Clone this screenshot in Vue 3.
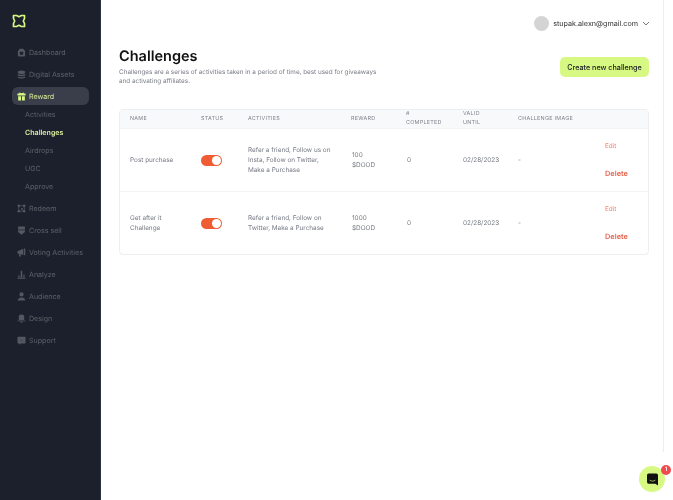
<template>
  <div class="page">
    <aside class="sidebar">
      <svg class="logo" viewBox="0 0 14 14" fill="none" stroke="#d7f984" stroke-width="1.7" stroke-linejoin="round">
        <path d="M1.5 1.5h3l2.5 1.2 2.5-1.2h3v3L11.3 7l1.2 2.5v3h-3L7 11.3l-2.5 1.2h-3v-3L2.7 7 1.5 4.5z" />
      </svg>
      <nav class="nav">
        <template v-for="item in navItems" :key="item.label">
          <a class="nav-item" :class="{ active: item.active }">
            <svg class="nav-icon" viewBox="0 0 10 10" :fill="item.active ? '#d7f984' : '#54575f'" v-html="item.icon"></svg>
            <span>{{ item.label }}</span>
          </a>
          <div v-if="item.children" class="sub-list">
            <a v-for="child in item.children" :key="child" class="sub-item" :class="{ current: child === 'Challenges' }">{{ child }}</a>
          </div>
        </template>
      </nav>
    </aside>

    <main class="main">
      <header class="topbar">
        <span class="avatar"></span>
        <span class="email">stupak.alexn@gmail.com</span>
        <svg class="chevron" viewBox="0 0 8 5" fill="none" stroke="#555" stroke-width="0.8"><path d="M1 1l3 3 3-3" /></svg>
      </header>

      <section class="heading">
        <div>
          <h1>Challenges</h1>
          <p>Challenges are a series of activities taken in a period of time, best used for giveaways and activating affiliates.</p>
        </div>
        <button type="button" class="create-btn">Create new challenge</button>
      </section>

      <div class="table-card">
        <table>
          <thead>
            <tr>
              <th class="col-name">NAME</th>
              <th class="col-status">STATUS</th>
              <th class="col-activities">ACTIVITIES</th>
              <th class="col-reward">REWARD</th>
              <th class="col-completed"># COMPLETED</th>
              <th class="col-valid">VALID UNTIL</th>
              <th class="col-image">CHALLENGE IMAGE</th>
              <th></th>
            </tr>
          </thead>
          <tbody>
            <tr v-for="row in challenges" :key="row.name">
              <td class="col-name">{{ row.name }}</td>
              <td><span class="toggle"><i></i></span></td>
              <td>{{ row.activities }}</td>
              <td class="reward">{{ row.reward }}<br />$DOOD</td>
              <td class="completed">{{ row.completed }}</td>
              <td>{{ row.valid }}</td>
              <td>-</td>
              <td class="actions">
                <a class="edit">Edit</a>
                <a class="delete">Delete</a>
              </td>
            </tr>
          </tbody>
        </table>
      </div>
    </main>

    <div class="scroll-track"></div>

    <div class="chat">
      <svg viewBox="0 0 12 13" width="11" height="13">
        <path d="M1.8 0h8.4A1.8 1.8 0 0 1 12 1.8V13l-3-2H1.8A1.8 1.8 0 0 1 0 9.2V1.8A1.8 1.8 0 0 1 1.8 0z" fill="#111" />
        <path d="M2.8 7.2c2 1.4 4.4 1.4 6.4 0" fill="none" stroke="#d7f984" stroke-width="0.7" />
      </svg>
      <span class="chat-badge">1</span>
    </div>
  </div>
</template>

<script setup>
// icon shapes are drawn on a 10x10 box, dark parts use the sidebar colour
const navItems = [
  { label: 'Dashboard', icon: '<path d="M3.2 .8h3.6L9 3.4v4.8q0 1.2-1.2 1.2H2.2Q1 9.400 1 8.200V3.400z"/><rect x="3.200" y="4.200" width="3.600" height="3.200" rx=".5" fill="#1b202c"/>' },
  { label: 'Digital Assets', icon: '<ellipse cx="5" cy="2.500" rx="4.200" ry="2"/><path d="M.8 4.200c1.500 1.500 6.900 1.500 8.400 0v1.500c-1.500 1.500-6.900 1.500-8.400 0zM.8 7c1.500 1.500 6.900 1.500 8.400 0v1.200c-1.500 1.600-6.900 1.600-8.400 0z"/>' },
  {
    label: 'Reward',
    active: true,
    icon: '<path d="M.5 1.800h9v2.200h-9zM1.300 4.700h3.200v4.800H1.300zM5.500 4.700h3.200v4.800H5.500zM2.500.5L5 1.500 7.500.5v1.300h-5z"/>',
    children: ['Activities', 'Challenges', 'Airdrops', 'UGC', 'Approve']
  },
  { label: 'Redeem', icon: '<circle cx="5" cy="5" r="3.400" fill="none" stroke="#54575f" stroke-width=".9"/><circle cx="2" cy="2" r="1.400"/><circle cx="8" cy="2" r="1.400"/><circle cx="2" cy="8" r="1.400"/><circle cx="8" cy="8" r="1.400"/><circle cx="5.500" cy="5.500" r="1.100"/>' },
  { label: 'Cross sell', icon: '<path d="M1.200 .5h7.600v6.200L5 9.800 1.200 6.700z"/><rect x="1.200" y="4" width="7.600" height=".7" fill="#1b202c"/>' },
  { label: 'Voting Activities', icon: '<path d="M.5 3.500L7 .8v6.900L.5 6zM7.800 .5h1.400v7.500H7.800zM2.200 6.800l2 .6v2.100H2.200z"/>' },
  { label: 'Analyze', icon: '<path d="M.5 9h9v.7h-9zM1.500 5.800h1.300V9H1.500zM4.100.8h1.700V9H4.100zM7.100 5h1.300v4H7.100z"/>' },
  { label: 'Audience', icon: '<circle cx="5" cy="2.700" r="2.300"/><path d="M.8 9.500C.8 4.900 9.200 4.900 9.200 9.500z"/>' },
  { label: 'Design', icon: '<path d="M2 6.800V2.400Q2 .5 5 .5t3 1.900v4.400zM.6 7.100h8.800v1H.6zM4 8.300h2v1.300H4z"/>' },
  { label: 'Support', icon: '<path d="M1.500 .8h7q1 0 1 1v5.400q0 1-1 1H4L2.200 9.600V8.200H1.500q-1 0-1-1V1.800q0-1 1-1z"/><circle cx="5" cy="4.500" r=".8" fill="#3a3d45"/>' }
]

const challenges = [
  {
    name: 'Post purchase',
    activities: 'Refer a friend, Follow us on Insta, Follow on Twitter, Make a Purchase',
    reward: 100,
    completed: 0,
    valid: '02/28/2023'
  },
  {
    name: 'Get after it Challenge',
    activities: 'Refer a friend, Follow on Twitter, Make a Purchase',
    reward: 1000,
    completed: 0,
    valid: '02/28/2023'
  }
]
</script>

<style>
html,
body {
  margin: 0;
  background: #fff;
}
</style>

<style scoped>
.page {
  display: flex;
  position: relative;
  width: 673px;
  height: 500px;
  overflow: hidden;
  font-family: Inter, "Liberation Sans", sans-serif;
  text-rendering: geometricPrecision;
  will-change: transform;
  background: #fff;
}

.sidebar {
  flex: none;
  width: 101px;
  height: 500px;
  box-sizing: border-box;
  padding: 14px 12px 0;
  background: #1b202c;
  border-right: 1px solid #2e3340;
}

.logo {
  display: block;
  width: 14px;
  height: 14px;
}

.nav {
  display: flex;
  flex-direction: column;
  margin-top: 13px;
}

.nav-item {
  display: flex;
  align-items: center;
  gap: 3px;
  height: 18px;
  margin: 2px 0;
  padding-left: 5px;
  border-radius: 6px;
  font-size: 7.1px;
  white-space: nowrap;
  color: #5d6068;
}

.nav-item.active {
  width: 72px;
  background: #3a3e4a;
  color: #d8eb9a;
}

.nav-icon {
  flex: none;
  width: 9px;
  height: 9px;
}

.sub-list {
  display: flex;
  flex-direction: column;
  margin: -2px 0 2px;
}

.sub-item {
  display: flex;
  align-items: center;
  height: 18px;
  padding-left: 13px;
  font-size: 7.1px;
  color: #5d6068;
}

.sub-item.current {
  color: #dcefa0;
  font-weight: 600;
}

.main {
  flex: none;
  width: 562px;
  box-sizing: border-box;
  padding: 15px 14px 0 18px;
}

.topbar {
  display: flex;
  align-items: center;
  justify-content: flex-end;
  height: 16px;
}

.avatar {
  width: 15px;
  height: 15px;
  border-radius: 50%;
  background: #d4d4d4;
  margin-right: 4px;
}

.email {
  font-size: 7.2px;
  color: #333;
}

.chevron {
  width: 8px;
  height: 5px;
  margin: 0 -1px 0 4px;
}

.heading {
  display: flex;
  justify-content: space-between;
  align-items: flex-start;
  margin-top: 17px;
}

h1 {
  margin: 0;
  font-size: 14.5px;
  line-height: 18px;
  font-weight: 600;
  color: #111;
}

.heading p {
  width: 265px;
  margin: 1.5px 0 0;
  font-size: 6.35px;
  line-height: 9.5px;
  color: #7a7e88;
}

.create-btn {
  margin-top: 9px;
  width: 89px;
  height: 20px;
  padding: 0;
  border: none;
  border-radius: 5px;
  background: #d7f984;
  color: #16181d;
  font-family: inherit;
  font-size: 7.2px;
  font-weight: 500;
}

.table-card {
  margin-top: 22.5px;
  border: 1px solid #eceef1;
  border-radius: 4px;
  overflow: hidden;
}

table {
  width: 100%;
  border-collapse: collapse;
  table-layout: fixed;
}

th {
  height: 18px;
  padding: 0;
  background: #f8f9fa;
  text-align: left;
  font-size: 5.4px;
  line-height: 9px;
  font-weight: 400;
  letter-spacing: 0.27px;
  color: #7f838c;
}

td {
  height: 62px;
  padding: 0;
  border-top: 1px solid #f2f3f5;
  font-size: 6.4px;
  line-height: 10px;
  color: #767a84;
}

.col-name { width: 81px; padding-left: 10px; box-sizing: border-box; }
.col-status { width: 47px; }
.col-activities { width: 103px; }
.col-reward { width: 55px; }
.col-completed { width: 57px; padding-right: 22px; box-sizing: border-box; }
.col-valid { width: 55px; padding-right: 25px; box-sizing: border-box; }
.col-image { width: 87px; }

td.col-name {
  padding-right: 12px;
}

td:nth-child(3) {
  padding-right: 19px;
}

.reward {
  padding-left: 1px;
}

.completed {
  padding-left: 1px;
}

.toggle {
  display: block;
  position: relative;
  width: 20.5px;
  height: 11px;
  border-radius: 6px;
  background: #f05d35;
}

.toggle i {
  position: absolute;
  top: 1px;
  right: 1px;
  width: 9px;
  height: 9px;
  border-radius: 50%;
  background: #fff;
}

.actions a {
  display: block;
}

.edit {
  color: #f0836a;
}

.delete {
  margin-top: 18px;
  font-size: 7.4px;
  font-weight: 600;
  color: #e5654e;
}

.scroll-track {
  flex: none;
  width: 10px;
  height: 452px;
  box-sizing: border-box;
  border-left: 1px solid #eceef1;
  background: #fff;
}

.chat {
  position: absolute;
  right: 8px;
  bottom: 8px;
  display: flex;
  align-items: center;
  justify-content: center;
  width: 26px;
  height: 26px;
  border-radius: 50%;
  background: #d7f984;
}

.chat-badge {
  position: absolute;
  top: -1px;
  right: -6px;
  width: 10px;
  height: 10px;
  border-radius: 50%;
  background: #ef4a4f;
  color: #fff;
  font-size: 6px;
  font-weight: 600;
  line-height: 10px;
  text-align: center;
}
</style>
